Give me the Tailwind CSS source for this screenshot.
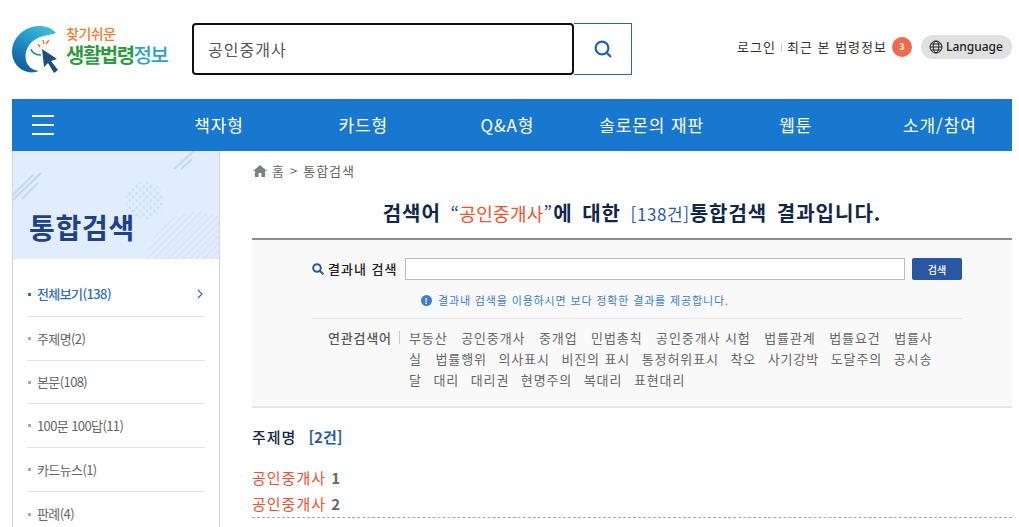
<!DOCTYPE html>
<html lang="ko">
<head>
    <meta charset="UTF-8">
    <title>찾기쉬운 생활법령정보</title>
    <script src="https://cdn.jsdelivr.net/npm/@tailwindcss/browser@4"></script>
</head>
<body class="bg-white h-[527px] overflow-hidden font-['Noto_Sans_CJK_KR','Noto_Sans',sans-serif] text-[#333]">
    <div class="w-[1000px] ml-3">
        <!-- top -->
        <header class="h-[99px] flex items-start">
            <a class="w-[180px] h-[99px] flex items-start pt-[25px]">
                <svg class="w-[52px] h-[48px] shrink-0" viewBox="0 0 52 48">
                    <defs>
                        <linearGradient id="ring" x1="0.7" y1="0" x2="0.2" y2="1">
                            <stop offset="0" stop-color="#3dbcd8"/>
                            <stop offset="0.55" stop-color="#1c83c0"/>
                            <stop offset="1" stop-color="#0f5a96"/>
                        </linearGradient>
                    </defs>
                    <path d="M44 8C38 1 28 0 20 2C7 6 0 16 0 27c0 10 7 18 16 20 4 1 8 0 11-1-7-1-12-5-13-11-2-9 3-18 12-22 6-3 13-3 18-5z" fill="url(#ring)"/>
                    <path d="M19 24c1 4 5 6 10 6" fill="none" stroke="#2a8cc4" stroke-width="1.6"/>
                    <path d="M26 19l2 3M31 15l1 4M37 15l-3 4" fill="none" stroke="#e8762d" stroke-width="1.4"/>
                    <path d="M30 24L45 34L39 36L46 45L42 48L36 38L32 42z" fill="#1c4f7d"/>
                </svg>
                <span class="flex flex-col ml-[2px] -mt-[1px]">
                    <span class="text-[14px] leading-[19px] font-medium text-[#f47b34] tracking-[-0.5px]">찾기쉬운</span>
                    <span class="text-[20px] leading-[24px] font-bold text-[#2f9b3f] tracking-[-1.5px] whitespace-nowrap">생활법령<span class="font-medium text-[#2a9fd8]">정보</span></span>
                </span>
            </a>
            <div class="flex mt-[23px]">
                <div class="w-[382px] h-[52px] border-2 border-[#111] rounded-[4px] flex items-center pl-[14px] text-[16px] tracking-[1px] text-[#555]">공인중개사</div>
                <div class="w-[58px] h-[52px] border border-l-0 border-[#2a63b0] flex items-center justify-center">
                    <svg class="w-[18px] h-[18px]" viewBox="0 0 18 18" fill="none" stroke="#1f62ad" stroke-width="2.2">
                        <circle cx="8" cy="8" r="6.4"/>
                        <path d="M12.6 12.6L17 17"/>
                    </svg>
                </div>
            </div>
            <div class="ml-auto flex items-center mt-[35px] h-[24px] text-[13px] text-[#333] whitespace-nowrap">
                <span class="tracking-[1px]">로그인</span>
                <span class="w-px h-[9px] bg-[#ccc] mx-[5px]"></span>
                <span class="tracking-[1px]">최근 본 법령정보</span>
                <span class="ml-[5px] w-5 h-5 rounded-full bg-[#ee6a4f] text-white text-[9px] font-bold flex items-center justify-center">3</span>
                <span class="ml-[9px] w-[91px] h-6 rounded-full bg-[#e0e0e0] flex items-center pl-2 text-[#222] text-[12px] font-['Noto_Sans',sans-serif] font-medium">
                    <svg class="w-[14px] h-[14px] mr-[3px]" viewBox="0 0 14 14" fill="none" stroke="#222" stroke-width="1">
                        <circle cx="7" cy="7" r="6"/>
                        <ellipse cx="7" cy="7" rx="2.8" ry="6"/>
                        <path d="M1 7h12M1.8 4h10.4M1.8 10h10.4"/>
                    </svg>
                    Language
                </span>
            </div>
        </header>

        <!-- nav -->
        <nav class="h-[52px] bg-[#1878cf] flex items-center relative">
            <div class="w-[135px] pl-5 shrink-0">
                <div class="w-[22px] flex flex-col gap-[7px]">
                    <span class="h-[2px] bg-white"></span>
                    <span class="h-[2px] bg-white"></span>
                    <span class="h-[2px] bg-white"></span>
                </div>
            </div>
            <ul class="grid grid-cols-6 flex-1 text-center text-white text-[17px] tracking-[0.9px] whitespace-nowrap">
                <li>책자형</li>
                <li>카드형</li>
                <li>Q&amp;A형</li>
                <li>솔로몬의 재판</li>
                <li>웹툰</li>
                <li>소개/참여</li>
            </ul>
        </nav>

        <div class="flex">
            <!-- side -->
            <aside class="w-[208px] h-[376px] shrink-0 border-x border-[#d2d6dc] overflow-hidden">
                <div class="h-[108px] bg-[#e1ecfd] relative flex items-end pl-4 pb-[14px]">
                    <svg class="absolute left-0 top-0 w-[206px] h-[108px]" viewBox="0 0 206 108">
                        <defs>
                            <pattern id="dots" width="5" height="5" patternUnits="userSpaceOnUse" patternTransform="rotate(45)">
                                <circle cx="2.5" cy="2.5" r="1.3" fill="#c9daf5"/>
                            </pattern>
                            <pattern id="lines" width="5" height="5" patternUnits="userSpaceOnUse" patternTransform="rotate(-45)">
                                <rect width="5" height="2" fill="#d9e6fa"/>
                            </pattern>
                        </defs>
                        <circle cx="132" cy="49" r="19" fill="url(#dots)"/>
                        <circle cx="184" cy="111" r="50" fill="url(#lines)"/>
                        <path d="M0 44L20 24M0 49L28 22M9 48L25 32" stroke="#c3d6f4" stroke-width="2" fill="none"/>
                        <path d="M161 18L181 0M168 18L179 8" stroke="#c3d6f4" stroke-width="2" fill="none"/>
                    </svg>
                    <h2 class="relative text-[28px] leading-[36px] font-bold text-[#1f4287] tracking-[0.7px]">통합검색</h2>
                </div>
                <ul class="px-[14px] text-[13px] text-[#666] tracking-[-0.6px]">
                    <li class="h-[58px] border-b border-[#e4e4e4] flex items-center pt-[13px] font-medium text-[#2e6fc4]">
                        <span class="w-[3px] h-[3px] bg-[#2e6fc4] mr-[6px] ml-[1px]"></span>전체보기(138)
                        <svg class="ml-auto mr-[2px] w-[6px] h-[10px]" viewBox="0 0 6 10" fill="none" stroke="#2e6fc4" stroke-width="1.2"><path d="M1 1l4 4-4 4"/></svg>
                    </li>
                    <li class="h-[44px] border-b border-[#e4e4e4] flex items-center"><span class="w-[3px] h-[3px] bg-[#aaa] mr-[6px] ml-[1px]"></span>주제명(2)</li>
                    <li class="h-[43px] border-b border-[#e4e4e4] flex items-center"><span class="w-[3px] h-[3px] bg-[#aaa] mr-[6px] ml-[1px]"></span>본문(108)</li>
                    <li class="h-[44px] border-b border-[#e4e4e4] flex items-center"><span class="w-[3px] h-[3px] bg-[#aaa] mr-[6px] ml-[1px]"></span>100문 100답(11)</li>
                    <li class="h-[44px] border-b border-[#e4e4e4] flex items-center"><span class="w-[3px] h-[3px] bg-[#aaa] mr-[6px] ml-[1px]"></span>카드뉴스(1)</li>
                    <li class="h-[44px] flex items-center"><span class="w-[3px] h-[3px] bg-[#aaa] mr-[6px] ml-[1px]"></span>판례(4)</li>
                </ul>
            </aside>

            <!-- content -->
            <main class="ml-8 flex-1 min-w-0">
                <div class="h-[40px] flex items-center text-[13px] tracking-[1px] text-[#666]">
                    <svg class="w-[14px] h-[12px] mr-[5px] ml-px" viewBox="0 0 14 12" fill="#7b8187"><path d="M7 0L0 6h2v6h3.6V8h2.8v4H12V6h2z"/></svg>
                    <span>홈</span><span class="mx-[5px]">&gt;</span><span>통합검색</span>
                </div>
                <h1 class="h-[47px] pt-[8px] text-center text-[20px] leading-[28px] font-bold text-[#10264d] tracking-[1px] [word-spacing:3px] whitespace-nowrap">
                    검색어 <span class="font-normal text-[#1f4287] text-[18px] tracking-[0.3px]">“</span><span class="font-normal text-[#f0502d] text-[18px] tracking-[0.3px]">공인중개사</span><span class="font-normal text-[#1f4287] text-[18px]">”</span>에 대한 <span class="font-normal text-[#2a5aa5] text-[17px] tracking-[0.6px]">[138건]</span>통합검색 결과입니다.
                </h1>
                <section class="h-[170px] bg-[#f9f9f9] border-t-2 border-t-[#8c8c8c] border-b-2 border-b-[#e4e4e4] pt-[18px]">
                    <div class="flex items-center h-[22px] pl-[60px]">
                        <svg class="w-3 h-3 mr-1" viewBox="0 0 12 12" fill="none" stroke="#2a5aa5" stroke-width="2"><circle cx="5" cy="5" r="3.8"/><path d="M8 8l3.4 3.4"/></svg>
                        <label class="w-[77px] text-[13px] font-medium text-[#222] whitespace-nowrap tracking-[1px]">결과내 검색</label>
                        <div class="w-[500px] h-[22px] bg-white border border-[#bbb]"></div>
                        <button class="ml-[7px] w-[50px] h-[22px] bg-[#2a56a4] rounded-[2px] text-white text-[10px] font-medium">검색</button>
                    </div>
                    <p class="mt-[11px] ml-[169px] h-[18px] flex items-center text-[11px] text-[#3d80c9] tracking-[0.85px] whitespace-nowrap">
                        <span class="w-[11px] h-[11px] rounded-full bg-[#3d80c9] text-white text-[8px] font-bold leading-[11px] text-center mr-[6px]">!</span>결과내 검색을 이용하시면 보다 정확한 결과를 제공합니다.
                    </p>
                    <div class="ml-[60px] mr-[50px] mt-[9px] border-t border-[#e4e4e4] pt-[8px] flex text-[13px] leading-[21px]">
                        <span class="w-[97px] pl-4 shrink-0 font-medium text-[#555] relative whitespace-nowrap tracking-[0.8px]">연관검색어<span class="absolute right-[9px] top-[4px] w-px h-[13px] bg-[#ccc]"></span></span>
                        <p class="text-[#666] tracking-[0.9px] [word-spacing:9px] w-[528px] break-all"><span class="[word-spacing:normal]">부동산</span> 공인중개사 중개업 민법총칙 <span class="[word-spacing:normal]">공인중개사 시험</span> 법률관계 법률요건 법률사실 <span class="[word-spacing:7px]">법률행위 의사표시 <span class="[word-spacing:normal]">비진의 표시</span> 통정허위표시 착오 사기강박 도달주의 공시송달 대리 대리권 현명주의 복대리 표현대리</span></p>
                    </div>
                </section>
                <div class="pt-[17px] text-[15px] font-medium text-[#10264d] leading-[24px] tracking-[1px]">주제명<span class="ml-[12px] text-[#2a5aa5] text-[15px] font-bold tracking-[0px]">[2건]</span></div>
                <ul class="mt-[16px] text-[15px] leading-[26px] font-bold text-[#666] tracking-[1px]">
                    <li><span class="text-[#f0502d] font-normal">공인중개사</span> 1</li>
                    <li class="border-b border-dashed border-[#aaa]"><span class="text-[#f0502d] font-normal">공인중개사</span> 2</li>
                </ul>
            </main>
        </div>
    </div>
</body>
</html>
